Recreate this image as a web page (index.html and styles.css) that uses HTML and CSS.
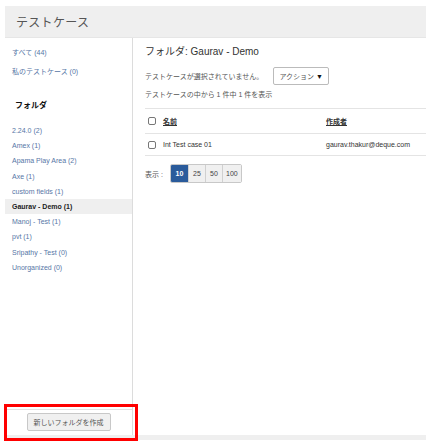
FILE: index.html
```html
<!DOCTYPE html>
<html lang="ja">

<head>
    <meta charset="UTF-8" />
    <meta name="viewport" content="width=device-width, initial-scale=1.0" />
    <title>テストケース</title>
    <link rel="stylesheet" href="styles.css">
</head>

<body>
    <div class="page">
        <!-- ヘッダー -->
        <div class="header">
            <h1>テストケース</h1>
        </div>

        <div class="body">
            <!-- 左のフォルダ一覧 -->
            <div class="sidebar">
                <div class="sidebar-top">
                    <a class="link" href="#">すべて (44)</a>
                    <a class="link" href="#">私のテストケース (0)</a>
                    <h3 class="folder-title">フォルダ</h3>
                    <ul class="folders">
                        <li><a href="#">2.24.0 (2)</a></li>
                        <li><a href="#">Amex (1)</a></li>
                        <li><a href="#">Apama Play Area (2)</a></li>
                        <li><a href="#">Axe (1)</a></li>
                        <li><a href="#">custom fields (1)</a></li>
                        <li class="active"><a href="#">Gaurav - Demo (1)</a></li>
                        <li><a href="#">Manoj - Test (1)</a></li>
                        <li><a href="#">pvt (1)</a></li>
                        <li><a href="#">Sripathy - Test (0)</a></li>
                        <li><a href="#">Unorganized (0)</a></li>
                    </ul>
                </div>
                <div class="sidebar-bottom">
                    <button class="btn">新しいフォルダを作成</button>
                </div>
            </div>

            <!-- テストケース一覧 -->
            <div class="main">
                <h2 class="main-title">フォルダ: Gaurav - Demo</h2>
                <div class="actions">
                    <span>テストケースが選択されていません。</span>
                    <button class="action-btn">アクション <span class="caret">▼</span></button>
                </div>
                <p class="count">テストケースの中から 1 件中 1 件を表示</p>

                <table class="cases">
                    <thead>
                        <tr>
                            <th class="col-check"><span class="check"></span></th>
                            <th class="col-name"><a href="#">名前</a></th>
                            <th class="col-author"><a href="#">作成者</a></th>
                        </tr>
                    </thead>
                    <tbody>
                        <tr>
                            <td class="col-check"><span class="check"></span></td>
                            <td>Int Test case 01</td>
                            <td>gaurav.thakur@deque.com</td>
                        </tr>
                    </tbody>
                </table>

                <div class="pager">
                    <span class="pager-label">表示 :</span>
                    <div class="pager-group">
                        <button class="on">10</button>
                        <button>25</button>
                        <button>50</button>
                        <button>100</button>
                    </div>
                </div>
            </div>
        </div>

        <div class="footer"></div>

        <!-- 強調の枠 -->
        <div class="highlight"></div>
    </div>
</body>

</html>
```

FILE: styles.css
```css
* {
    margin: 0;
    padding: 0;
    box-sizing: border-box;
}

body {
    font-family: "Liberation Sans", "Noto Sans CJK JP", sans-serif;
    color: #333;
    background: #fff;
}

ul {
    list-style: none;
}

a {
    text-decoration: none;
}

.page {
    position: relative;
    padding: 6px 0 0 5px;
    width: 426px;
    height: 447px;
    overflow: hidden;
}

.header {
    height: 32px;
    background: #efefef;
    border-bottom: 1px solid #e6e6e6;
    display: flex;
    align-items: center;
    padding-left: 11px;
}

.header h1 {
    font-size: 12px;
    font-weight: normal;
    color: #555;
    letter-spacing: 0.3px;
}

.body {
    display: flex;
    height: 397px;
}

.sidebar {
    width: 128px;
    border-right: 1px solid #dcdcdc;
    display: flex;
    flex-direction: column;
    justify-content: space-between;
}

.sidebar-top {
    padding-top: 5px;
}

.link {
    display: block;
    padding-left: 7px;
    line-height: 19px;
    font-size: 7px;
    color: #5676a6;
}

.folder-title {
    margin-top: 15px;
    padding-left: 10px;
    line-height: 19px;
    font-size: 8px;
    color: #111;
}

.folders {
    margin-top: 8px;
}

.folders li {
    line-height: 15.2px;
    font-size: 7px;
    padding-left: 7px;
}

.folders li a {
    color: #5676a6;
}

.folders li.active {
    background: #efefef;
}

.folders li.active a {
    color: #222;
    font-weight: bold;
}

.sidebar-bottom {
    border-top: 1px solid #e2e2e2;
    padding: 3px 0 4px;
    display: flex;
    justify-content: center;
}

.btn {
    width: 84px;
    height: 18px;
    font: 7px "Liberation Sans", "Noto Sans CJK JP", sans-serif;
    color: #555;
    background: #f0f0f0;
    border: 1px solid #c8c8c8;
    border-radius: 2px;
}

.main {
    flex: 1;
    padding: 7px 0 0 12px;
}

.main-title {
    font-size: 10px;
    font-weight: normal;
    line-height: 14px;
    color: #333;
}

.actions {
    margin-top: 8px;
    display: flex;
    align-items: center;
    font-size: 7px;
    color: #555;
}

.action-btn {
    margin-left: 10px;
    width: 56px;
    height: 18px;
    background: #fff;
    border: 1px solid #bbb;
    border-radius: 2px;
    font: 7px "Liberation Sans", "Noto Sans CJK JP", sans-serif;
    color: #555;
}

.action-btn .caret {
    color: #111;
    font-size: 7px;
}

.count {
    margin-top: 4px;
    font-size: 7px;
    line-height: 12px;
    color: #555;
}

.cases {
    margin-top: 7px;
    width: 100%;
    border-collapse: collapse;
    font-size: 7px;
}

.cases th,
.cases td {
    text-align: left;
    border-bottom: 1px solid #e4e4e4;
    padding: 0;
}

.cases thead tr {
    height: 25px;
    border-top: 1px solid #e4e4e4;
}

.cases tbody tr {
    height: 22px;
}

.cases th a {
    color: #333;
    text-decoration: underline;
}

.cases td {
    color: #333;
}

.col-check {
    width: 18px;
    padding-left: 3px !important;
}

.col-name {
    width: 163px;
}

.check {
    display: block;
    width: 8px;
    height: 8px;
    border: 1px solid #777;
    border-radius: 2px;
    background: #fff;
}

.pager {
    margin-top: 8px;
    display: flex;
    align-items: center;
    font-size: 7px;
    color: #555;
}

.pager-label {
    width: 25px;
}

.pager-group {
    display: flex;
    border: 1px solid #c8c8c8;
    border-radius: 2px;
    overflow: hidden;
}

.pager-group button {
    height: 17px;
    padding: 0 3px;
    min-width: 17px;
    border: none;
    border-left: 1px solid #d0d0d0;
    background: #f0f0f0;
    font: 7px "Liberation Sans", sans-serif;
    color: #444;
}

.pager-group button:first-child {
    border-left: none;
}

.pager-group button.on {
    background: #2a5b9b;
    color: #fff;
    font-weight: bold;
}

.footer {
    height: 5px;
    background: #efefef;
}

.highlight {
    position: absolute;
    left: 4px;
    top: 404px;
    width: 134px;
    height: 37px;
    border: 3px solid #ff0000;
}
```
